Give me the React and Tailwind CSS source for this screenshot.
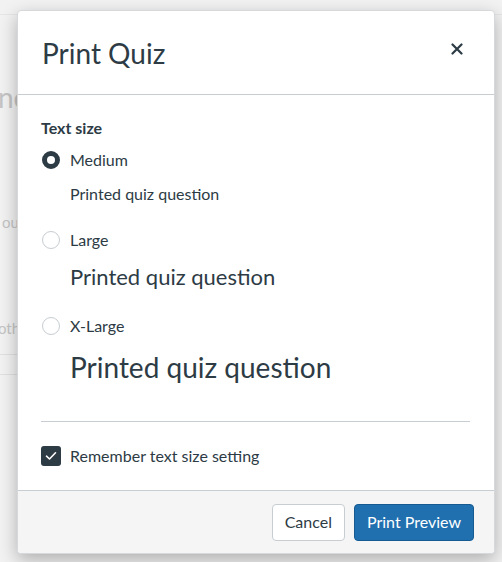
import React from "react";

function Radio({ checked }) {
  return checked ? (
    <span className="w-[18px] h-[18px] rounded-full border-[5px] border-[#2d3b45] bg-white shrink-0" />
  ) : (
    <span className="w-[18px] h-[18px] rounded-full border border-[#c7cdd1] bg-white shrink-0" />
  );
}

const options = [
  { label: "Medium", size: "text-[16px] leading-[20px]", checked: true, gapTop: "mt-[10px]", gapSample: "mt-[12px]" },
  { label: "Large", size: "text-[22px] leading-[28px]", checked: false, gapTop: "mt-[24px]", gapSample: "mt-[11px]" },
  { label: "X-Large", size: "text-[28px] leading-[34px]", checked: false, gapTop: "mt-[23px]", gapSample: "mt-[12px]" },
];

export default function App() {
  return (
    <div
      className="relative w-full h-[562px] overflow-hidden bg-[#f2f2f2] text-[#2d3b45]"
      style={{ fontFamily: "Lato, 'Open Sans', sans-serif" }}
    >
      {/* Background page, mostly covered */}
      <div className="flex flex-col text-[#c4c4c4]">
        <div className="h-[15px] border-b border-[#e6e6e6]" />
        <p className="mt-[65px] ml-[-2px] text-[28px] leading-[34px]">nc</p>
        <p className="mt-[98px] ml-[2px] text-[15px] leading-[20px]">ou</p>
        <p className="mt-[86px] ml-[-2px] text-[15px] leading-[20px]">oth</p>
        <div className="mt-[16px] h-px w-[20px] bg-[#e0e0e0]" />
        <div className="mt-[19px] h-px w-[20px] bg-[#e0e0e0]" />
      </div>

      {/* Modal */}
      <div className="absolute left-[17px] top-[10px] w-[478px] bg-white border border-[#d5d9dc] rounded-[4px] shadow-[0_6px_18px_rgba(0,0,0,0.28)] overflow-hidden">
        {/* Header */}
        <div className="h-[84px] flex items-center justify-between px-6 border-b border-[#c7cdd1]">
          <h2 className="text-[28px] leading-[34px] font-normal">Print Quiz</h2>
          <button className="w-6 h-6 flex items-center justify-center mr-[1px] mb-[8px]">
            <svg width="12" height="12" viewBox="0 0 12 12">
              <path d="M1.5 1.5 L10.5 10.5 M10.5 1.5 L1.5 10.5" stroke="#2d3b45" strokeWidth="2.2" strokeLinecap="round" />
            </svg>
          </button>
        </div>

        {/* Body */}
        <div className="pl-[23px] pr-6 pt-[23px] pb-[22px]">
          <p className="text-[16px] leading-[20px] font-bold">Text size</p>
          {options.map((o) => (
            <div key={o.label} className="pl-px">
              <label className={`${o.gapTop} h-6 flex items-center gap-[10px] text-[16px]`}>
                <Radio checked={o.checked} />
                <span>{o.label}</span>
              </label>
              <p className={`${o.gapSample} pl-[28px] ${o.size}`}>Printed quiz question</p>
            </div>
          ))}
          <div className="mt-[37px] h-px bg-[#c7cdd1]" />
          <label className="mt-[22px] h-6 flex items-center gap-[9px] text-[16px]">
            <span className="w-5 h-5 rounded-[3px] bg-[#2d3b45] flex items-center justify-center">
              <svg width="12" height="10" viewBox="0 0 12 10">
                <path d="M1.5 5.2 L4.5 8 L10.5 1.8" fill="none" stroke="#fff" strokeWidth="1.6" strokeLinecap="round" strokeLinejoin="round" />
              </svg>
            </span>
            <span>Remember text size setting</span>
          </label>
        </div>

        {/* Footer */}
        <div className="h-[63px] bg-[#f5f5f5] border-t border-[#c7cdd1] flex items-center justify-end gap-[9px] pr-5">
          <button className="h-[37px] px-3 bg-white border border-[#c7cdd1] rounded-[4px] text-[16px] text-[#2d3b45]">
            Cancel
          </button>
          <button className="h-[37px] px-3 bg-[#2070b0] border border-[#165a92] rounded-[4px] text-[16px] text-white">
            Print Preview
          </button>
        </div>
      </div>
    </div>
  );
}
